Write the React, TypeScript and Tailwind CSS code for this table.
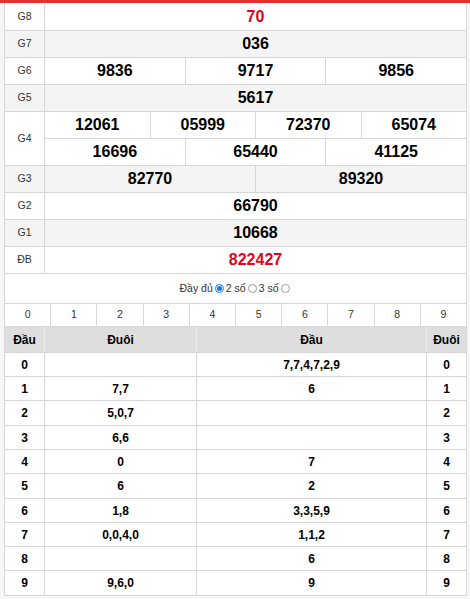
import React from "react"

type Prize = { label: string; rows: string[][]; red?: boolean }

const prizes: Prize[] = [
  { label: "G8", rows: [["70"]], red: true },
  { label: "G7", rows: [["036"]] },
  { label: "G6", rows: [["9836", "9717", "9856"]] },
  { label: "G5", rows: [["5617"]] },
  { label: "G4", rows: [["12061", "05999", "72370", "65074"], ["16696", "65440", "41125"]] },
  { label: "G3", rows: [["82770", "89320"]] },
  { label: "G2", rows: [["66790"]] },
  { label: "G1", rows: [["10668"]] },
  { label: "ĐB", rows: [["822427"]], red: true },
]

// đầu, đuôi, row height (incl. border)
const loto: [string, string, string, string][] = [
  ["0", "", "7,7,4,7,2,9", "h-[24px]"],
  ["1", "7,7", "6", "h-[24px]"],
  ["2", "5,0,7", "", "h-[25px]"],
  ["3", "6,6", "", "h-[24px]"],
  ["4", "0", "7", "h-[24px]"],
  ["5", "6", "2", "h-[25px]"],
  ["6", "1,8", "3,3,5,9", "h-[24px]"],
  ["7", "0,0,4,0", "1,1,2", "h-[24px]"],
  ["8", "", "6", "h-[24px]"],
  ["9", "9,6,0", "9", "h-[25px]"],
]

function Radio({ checked }: { checked?: boolean }) {
  if (checked) {
    return (
      <span className="mx-[2px] inline-flex h-[9px] w-[9px] items-center justify-center rounded-full border border-[#1a73e8] bg-white">
        <span className="h-[5px] w-[5px] rounded-full bg-[#1a73e8]" />
      </span>
    )
  }
  return <span className="mx-[2px] inline-block h-[9px] w-[9px] rounded-full border border-[#9a9a9a] bg-white" />
}

function PrizeRow({ prize, striped }: { prize: Prize; striped: boolean }) {
  return (
    <div className={`flex border-b border-[#d6d6d6] ${striped ? "bg-[#f4f4f4]" : "bg-white"}`}>
      <div className="flex w-[40px] items-center justify-center border-r border-[#d6d6d6] text-[10.5px] text-[#333]">
        {prize.label}
      </div>
      <div className="flex flex-1 flex-col">
        {prize.rows.map((nums, i) => (
          <div
            key={i}
            className={`flex ${i < prize.rows.length - 1 ? "h-[27px] border-b border-[#d6d6d6]" : "h-[26px]"}`}
          >
            {nums.map((n, j) => (
              <div
                key={j}
                className={`flex flex-1 items-center justify-center text-[16px] font-bold ${
                  prize.red ? "text-[#e8001c]" : "text-black"
                } ${j < nums.length - 1 ? "border-r border-[#d6d6d6]" : ""}`}
              >
                {n}
              </div>
            ))}
          </div>
        ))}
      </div>
    </div>
  )
}

export default function App() {
  return (
    <div className="min-h-[599px] w-[470px] bg-[#f6f6f6] font-['Liberation_Sans',Arial,sans-serif]">
      <div className="h-[3px] bg-[#ee2b30]" />
      <div className="ml-[4px] w-[463px] border-x border-[#d6d6d6] bg-white pt-[1px]">
        {prizes.map((p, i) => (
          <PrizeRow key={p.label} prize={p} striped={i % 2 === 1} />
        ))}

        <div className="flex h-[29px] items-center justify-center text-[10.5px] text-[#333]">
          <span>Đầy đủ</span>
          <Radio checked />
          <span>2 số</span>
          <Radio />
          <span>3 số</span>
          <Radio />
        </div>

        <div className="flex h-[24px] border-y border-[#d6d6d6]">
          {["0", "1", "2", "3", "4", "5", "6", "7", "8", "9"].map((d, i) => (
            <div
              key={d}
              className={`flex flex-1 items-center justify-center text-[10.5px] text-[#333] ${
                i < 9 ? "border-r border-[#d6d6d6]" : ""
              }`}
            >
              {d}
            </div>
          ))}
        </div>

        <div className="flex h-[26px] border-b border-[#d6d6d6] bg-[#dedede] text-[12px] font-bold text-black">
          <div className="flex w-[40px] items-center justify-center border-r border-[#ececec]">Đầu</div>
          <div className="flex w-[152px] items-center justify-center border-r border-[#ececec]">Đuôi</div>
          <div className="flex w-[230px] items-center justify-center border-r border-[#ececec]">Đầu</div>
          <div className="flex flex-1 items-center justify-center">Đuôi</div>
        </div>

        {loto.map(([d, tail, head, h]) => (
          <div key={d} className={`flex ${h} border-b border-[#d6d6d6] text-[12px] font-bold text-black`}>
            <div className="flex w-[40px] items-center justify-center border-r border-[#d6d6d6]">{d}</div>
            <div className="flex w-[152px] items-center justify-center border-r border-[#d6d6d6]">{tail}</div>
            <div className="flex w-[230px] items-center justify-center border-r border-[#d6d6d6]">{head}</div>
            <div className="flex flex-1 items-center justify-center">{d}</div>
          </div>
        ))}
      </div>
    </div>
  )
}
